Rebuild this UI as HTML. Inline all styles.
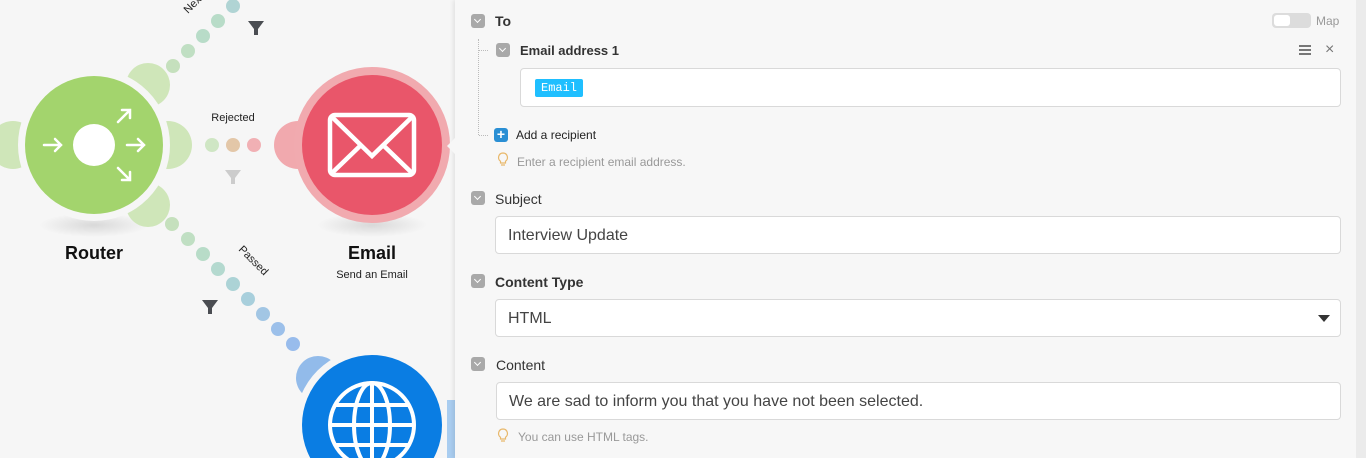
<!DOCTYPE html>
<html><head><meta charset="utf-8"><style>
*{box-sizing:border-box;margin:0;padding:0}
html,body{width:1366px;height:458px;overflow:hidden}
body{background:#f6f6f6;font-family:"Liberation Sans",sans-serif;position:relative;color:#333}
.a{position:absolute}
.chk{position:absolute;width:14px;height:14px;border-radius:3px;background:#a9a9a9}
.chk:after{content:"";position:absolute;left:4px;top:3px;width:4px;height:4px;border-right:1.5px solid #fff;border-bottom:1.5px solid #fff;transform:rotate(45deg)}
.lbl{position:absolute;font-size:14px;color:#333}
.inp{position:absolute;background:#fff;border:1px solid #d9d9d9;border-radius:4px;font-size:16px;color:#444;padding-left:12px;padding-top:2px;display:flex;align-items:center}
.hint{position:absolute;font-size:12px;color:#999}
</style></head><body>
<svg class="a" style="left:0;top:0" width="456" height="458">
<defs><radialGradient id="sh"><stop offset="0" stop-color="#000" stop-opacity=".12"/><stop offset="1" stop-color="#000" stop-opacity="0"/></radialGradient></defs>
<g fill="#b8dcc8">
<circle cx="173" cy="66" r="7" fill="#c5e0bd"/><circle cx="188" cy="51" r="7" fill="#c0dfc3"/><circle cx="203" cy="36" r="7"/><circle cx="218" cy="21" r="7"/><circle cx="233" cy="6" r="7" fill="#b0d4d4"/>
<circle cx="172" cy="224" r="7" fill="#c5e0bd"/><circle cx="188" cy="239" r="7" fill="#c0dfc3"/><circle cx="203" cy="254" r="7"/><circle cx="218" cy="269" r="7" fill="#b4d9cf"/><circle cx="233" cy="284" r="7" fill="#acd3d6"/><circle cx="248" cy="299" r="7" fill="#a8cfdc"/><circle cx="263" cy="314" r="7" fill="#a2c6e4"/><circle cx="278" cy="329" r="7" fill="#9cc0ea"/><circle cx="293" cy="344" r="7" fill="#98bcec"/>
</g>
<circle cx="212" cy="145" r="7" fill="#cfe6c4"/><circle cx="233" cy="145" r="7" fill="#e3c7a8"/><circle cx="254" cy="145" r="7" fill="#f1b0b4"/>
<text x="233" y="121" font-size="11" text-anchor="middle" fill="#222">Rejected</text>
<text transform="translate(238,250) rotate(45)" font-size="11" fill="#222">Passed</text>
<text transform="translate(188,14) rotate(-45)" font-size="11" fill="#222">Next</text>
<path d="M248 21h16l-6 8v6l-4 0v-6z" fill="#4a4d52"/>
<path d="M202 300h16l-6 8v6l-4 0v-6z" fill="#4a4d52"/>
<path d="M225 170h16l-6 8v6l-4 0v-6z" fill="#ccc"/>
<ellipse cx="94" cy="225" rx="55" ry="12" fill="url(#sh)"/>
<ellipse cx="372" cy="225" rx="55" ry="12" fill="url(#sh)"/>
<circle cx="13" cy="145" r="24" fill="#cfe6b9"/>
<circle cx="148" cy="85" r="22" fill="#cfe6b9"/>
<circle cx="168" cy="145" r="24" fill="#cfe6b9"/>
<circle cx="148" cy="205" r="22" fill="#cfe6b9"/>
<circle cx="94" cy="145" r="76" fill="#f6f6f6"/>
<circle cx="94" cy="145" r="69" fill="#a3d46d"/>
<circle cx="94" cy="145" r="21" fill="#fff"/>
<g stroke="#fff" stroke-width="2.5" fill="none" stroke-linecap="round">
<path d="M44 145h17M55 139l6 6-6 6"/><path d="M127 145h17M138 139l6 6-6 6"/>
<path d="M118 122l12-12M122 110h8v8"/><path d="M118 168l12 12M122 180h8v-8"/>
</g>
<circle cx="298" cy="145" r="24" fill="#f1a9ae"/>
<circle cx="372" cy="145" r="78" fill="#f1aaaf"/>
<circle cx="372" cy="145" r="70" fill="#e9566a"/>
<rect x="330" y="115" width="84" height="60" rx="5" fill="none" stroke="#fff" stroke-width="4.5"/>
<path d="M332 117l40 39 40-39M332 173l28-27M412 173l-28-27" stroke="#fff" stroke-width="4.5" fill="none"/>
<text x="94" y="259" font-size="18" font-weight="bold" text-anchor="middle" fill="#111">Router</text>
<text x="372" y="259" font-size="18" font-weight="bold" text-anchor="middle" fill="#111">Email</text>
<text x="372" y="278" font-size="11" text-anchor="middle" fill="#222">Send an Email</text>
<circle cx="318" cy="378" r="22" fill="#92bbea"/>
<circle cx="372" cy="425" r="77" fill="#f6f6f6"/>
<circle cx="372" cy="425" r="70" fill="#0a7de3"/>
<g stroke="#fff" stroke-width="4" fill="none"><circle cx="372" cy="425" r="42"/><ellipse cx="372" cy="425" rx="18" ry="42"/><path d="M372 383v84M330 425h84M336 405h72M336 445h72"/></g>
<rect x="447" y="400" width="9" height="58" fill="#a9cdf0"/>
</svg>
<div class="a" style="left:455px;top:0;width:901px;height:458px;background:#f7f7f7;box-shadow:-2px 0 4px rgba(0,0,0,.08)"></div>
<div class="a" style="left:1356px;top:0;width:10px;height:458px;background:#ebebeb"></div>
<div class="a" style="left:447px;top:138px;width:0;height:0;border-top:8px solid transparent;border-bottom:8px solid transparent;border-right:8px solid #f7f7f7"></div>

<div class="chk" style="left:471px;top:14px"></div><div class="lbl" style="left:495px;top:13px;font-weight:bold">To</div>
<div class="a" style="left:1272px;top:13px;width:39px;height:15px;border-radius:4px;background:#dcdcdc"></div>
<div class="a" style="left:1274px;top:15px;width:16px;height:11px;border-radius:3px;background:#fff"></div>
<div class="a" style="left:1316px;top:14px;font-size:12px;color:#999">Map</div>

<div class="a" style="left:478px;top:39px;width:1px;height:96px;border-left:1px dotted #bbb"></div>
<div class="a" style="left:479px;top:50px;width:9px;border-top:1px dotted #bbb"></div>
<div class="a" style="left:479px;top:135px;width:9px;border-top:1px dotted #bbb"></div>
<div class="chk" style="left:496px;top:43px"></div><div class="lbl" style="left:520px;top:43px;font-weight:bold;font-size:13px">Email address 1</div>
<div class="a" style="left:1299px;top:45px;width:12px;height:10px;border-top:2px solid #777;border-bottom:2px solid #777"></div>
<div class="a" style="left:1299px;top:49px;width:12px;border-top:2px solid #777"></div>
<div class="a" style="left:1325px;top:41px;font-size:16px;color:#777">×</div>
<div class="inp" style="left:520px;top:68px;width:821px;height:39px;padding-left:14px;padding-top:0"><span style="background:#1fbfff;color:#fff;font-family:'Liberation Mono',monospace;font-size:12px;padding:2px 6px;border-radius:2px">Email</span></div>
<div class="a" style="left:494px;top:128px;width:14px;height:14px;border-radius:3px;background:#2a8fd4;color:#fff;font-size:14px;line-height:13px;text-align:center;font-weight:bold">+</div>
<div class="a" style="left:516px;top:128px;font-size:12px;color:#222">Add a recipient</div>
<svg class="a" style="left:497px;top:152px" width="12" height="15"><path d="M6 1a4.5 4.5 0 0 0-2.5 8.2V11h5V9.2A4.5 4.5 0 0 0 6 1zM4 13h4" stroke="#e8b86b" fill="none" stroke-width="1.2"/></svg>
<div class="hint" style="left:517px;top:155px">Enter a recipient email address.</div>

<div class="chk" style="left:471px;top:191px"></div><div class="lbl" style="left:495px;top:191px">Subject</div>
<div class="inp" style="left:495px;top:216px;width:846px;height:38px">Interview Update</div>

<div class="chk" style="left:471px;top:274px"></div><div class="lbl" style="left:495px;top:274px;font-weight:bold">Content Type</div>
<div class="inp" style="left:495px;top:299px;width:846px;height:38px">HTML</div>
<div class="a" style="left:1318px;top:315px;border-left:6px solid transparent;border-right:6px solid transparent;border-top:7px solid #333"></div>

<div class="chk" style="left:471px;top:357px"></div><div class="lbl" style="left:496px;top:357px">Content</div>
<div class="inp" style="left:496px;top:382px;width:845px;height:38px">We are sad to inform you that you have not been selected.</div>
<svg class="a" style="left:497px;top:428px" width="12" height="15"><path d="M6 1a4.5 4.5 0 0 0-2.5 8.2V11h5V9.2A4.5 4.5 0 0 0 6 1zM4 13h4" stroke="#e8b86b" fill="none" stroke-width="1.2"/></svg>
<div class="hint" style="left:518px;top:430px">You can use HTML tags.</div>
</body></html>
